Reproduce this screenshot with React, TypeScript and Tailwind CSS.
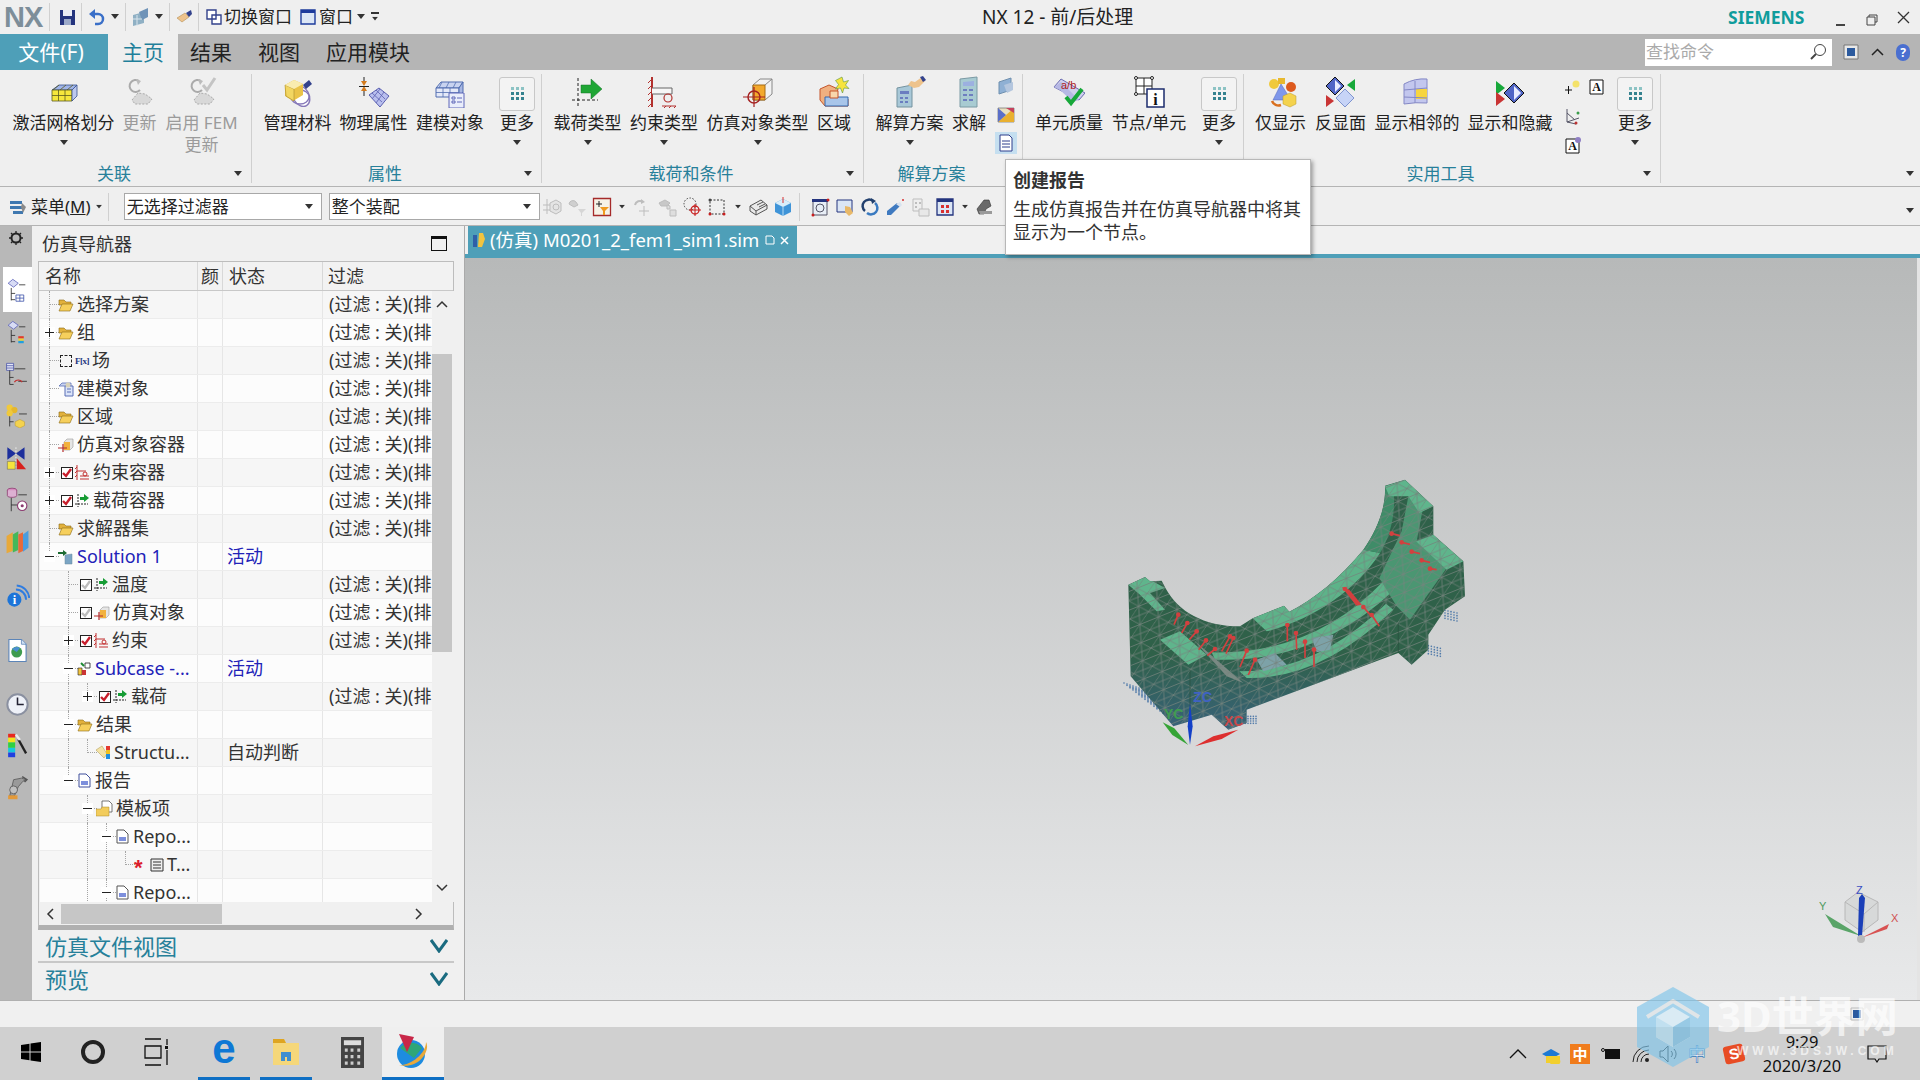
import type { ReactNode } from 'react'

const Ic = ({ s = 32, v = 32, children }: { s?: number; v?: number; children: ReactNode }) => (
  <svg width={s} height={s} viewBox={`0 0 ${v} ${v}`} className="shrink-0">
    {children}
  </svg>
)

const Caret = ({ className = '' }: { className?: string }) => (
  <svg width="10" height="6" viewBox="0 0 10 6" className={`shrink-0 ${className}`}>
    <path d="M1 0h8L5 5z" fill="#333" />
  </svg>
)

// ribbon icons
const IcMesh = () => (
  <Ic>
    <path d="M4 14l7-5h18l-5 5z" fill="#9fb4e8" stroke="#35508f" strokeWidth=".8" />
    <path d="M4 14h20v11H4z" fill="#f5e63c" stroke="#5a5a20" strokeWidth=".8" />
    <path d="M24 14l5-5v11l-5 5z" fill="#bcc8ee" stroke="#35508f" strokeWidth=".8" />
    <path d="M4 19.5h20M10.5 14v11M17 14v11M11 9l-6 5M18 9l-6 5M25 9l-6 5" stroke="#5a5a20" strokeWidth=".8" />
  </Ic>
)
const IcUpdate = ({ check = false }: { check?: boolean }) => (
  <Ic>
    <path d="M15 5a6 6 0 1 0 1 9" fill="none" stroke="#aaa" strokeWidth="2" />
    <path d="M12 3l5 2-3 4z" fill="#bbb" />
    <path d="M8 24l6-7 7 1 7 5-4 5H11z" fill="#d8d8d8" stroke="#aaa" strokeDasharray="2 1.5" />
    {check && <path d="M17 9l4 5 8-12" fill="none" stroke="#c4c4c4" strokeWidth="3" />}
  </Ic>
)
const IcMaterial = () => (
  <Ic>
    <ellipse cx="19" cy="20" rx="8" ry="11" fill="#fff" stroke="#8678b8" strokeWidth="1.4" transform="rotate(-30 19 20)" />
    <ellipse cx="18" cy="21" rx="9" ry="7" fill="none" stroke="#8678b8" strokeWidth="1.4" />
    <path d="M3 9l9-5 9 4v11l-10 6-8-5z" fill="#eac348" />
    <path d="M3 9l9 4v12l-8-5z" fill="#f2d661" stroke="#a8892b" strokeWidth=".6" />
    <path d="M3 9l9-5 9 4-9 5z" fill="#f9ecb0" />
    <path d="M21 9l6-5 3 4-6 5z" fill="#33428c" />
  </Ic>
)
const IcPhysical = () => (
  <Ic>
    <path d="M6 1v7M6 14v6" stroke="#222" />
    <path d="M3 5h6l-3 5zM3 15l3-5 3 5z" fill="#d47b1e" />
    <path d="M1 10.5h10" stroke="#222" />
    <path d="M11 19l10-7 10 8-9 11z" fill="#b9bfee" stroke="#5a5fb0" />
    <path d="M14 17l10 9M18 14l9 9M26 16l-8 11M22 13l-8 10" stroke="#5a5fb0" strokeWidth=".8" />
  </Ic>
)
const IcModel = () => (
  <Ic>
    <path d="M2 12l5-6h22l-4 6z" fill="#c8d3f0" stroke="#506db0" />
    <path d="M2 12h23v9H2z" fill="#e4e9f8" stroke="#506db0" />
    <path d="M8 6L5 12M15 6l-3 6M22 6l-3 6M9 12v9M16 12v9M2 16.5h23" stroke="#506db0" strokeWidth=".8" />
    <path d="M25 12l4-6v10l-4 5z" fill="#a6b6e2" stroke="#506db0" />
    <path d="M15 17h15v15H15z" fill="#e9edfb" stroke="#5e66b8" />
    <path d="M18 21h3v2h-3zM18 25h3v2h-3zM23 22h5M23 26h5" fill="none" stroke="#5e66b8" />
  </Ic>
)
const IcLoad = () => (
  <Ic>
    <path d="M6 2v28M0 24h26" stroke="#222" strokeDasharray="3 2" />
    <path d="M9 9h10V3l11 10-11 10v-6H9z" fill="#1fa635" stroke="#16702a" strokeWidth=".5" />
  </Ic>
)
const IcConstraint = () => (
  <Ic>
    <path d="M4 1v30" stroke="#b3312e" strokeWidth="2" />
    <path d="M0 7l4-4M0 13l4-4M0 19l4-4M0 25l4-4M0 31l4-4" stroke="#b3312e" />
    <path d="M4 12h20v6H4" fill="#f6f6f6" stroke="#666" />
    <circle cx="20" cy="22" r="4" fill="none" stroke="#b3312e" strokeWidth="1.2" />
    <path d="M14 30h14M15 33l3-3M20 33l3-3M25 33l3-3" stroke="#b3312e" />
  </Ic>
)
const IcSimObj = () => (
  <Ic>
    <path d="M11 9l7-6h12v15l-7 6H11z" fill="#f2f2f2" stroke="#888" />
    <path d="M11 9h12v15H11z" fill="#f3a92c" stroke="#a76d14" />
    <path d="M23 9l7-6" stroke="#888" />
    <circle cx="12" cy="21" r="6" fill="none" stroke="#a52222" strokeWidth="1.5" />
    <path d="M1 21h22M12 11v20" stroke="#a52222" strokeWidth="1.2" />
  </Ic>
)
const IcRegion = () => (
  <Ic>
    <path d="M2 13l9-4 9 4-2 9 12 1v7H7L2 24z" fill="#f0b080" stroke="#c4552a" />
    <path d="M7 21h23v9H7z" fill="#a8c5ea" stroke="#3569ad" />
    <path d="M12 15h8v7h-8z" fill="#f8d6ac" stroke="#c4552a" />
    <path d="M24 1l1.5 5 5-1.5-3 4.5 3.500 3.500-5-.5-1.500 5-2-5-5 1 3-4.500-3-4z" fill="#f7e43c" stroke="#5b9640" strokeWidth=".6" />
  </Ic>
)
const IcSolution = () => (
  <Ic>
    <path d="M3 12l15-3v22H3z" fill="#a8c8d8" stroke="#75939f" />
    <path d="M6 15h9v3H6zM6 21h3v2H6zM11 21h3v2h-3zM6 25h3v2H6zM11 25h3v2h-3z" fill="#6a7ec0" />
    <path d="M14 9l3-4 4 1 7-5 3 4-6 6-5 1z" fill="#eec38c" />
    <path d="M26 1l3-1 3 4-3 2z" fill="#33428c" />
  </Ic>
)
const IcSolve = () => (
  <Ic>
    <path d="M7 3l17-2v30H7z" fill="#a8cbd2" stroke="#7b9aa4" />
    <path d="M10 6l11-1v5H10z" fill="#9cb0e0" />
    <path d="M10 13h4v2h-4zM16 13h4v2h-4zM10 18h4v2h-4zM16 18h4v2h-4zM10 23h4v2h-4zM16 23h4v2h-4z" fill="#6e7fc0" />
  </Ic>
)
const IcQuality = () => (
  <Ic>
    <path d="M1 11l7-8 24 14-6 7z" fill="#cfd0ee" stroke="#6a6ab0" />
    <path d="M1 11l6 3 13 12 6-2-18-18z" fill="#b6b8e4" />
    <text x="8" y="13" fontSize="11" fill="#b01b1b" fontFamily="Liberation Sans">a/b</text>
    <path d="M13 21l5 6L29 13" fill="none" stroke="#17a83a" strokeWidth="4" />
  </Ic>
)
const IcNode = () => (
  <Ic>
    <path d="M3 2h16v16H3zM3 10h16M11 2v16" fill="#fff" stroke="#222" />
    <circle cx="3" cy="2" r="1.500" fill="#fff" stroke="#222" />
    <circle cx="19" cy="2" r="1.500" fill="#fff" stroke="#222" />
    <circle cx="3" cy="18" r="1.500" fill="#fff" stroke="#222" />
    <path d="M14 13h17v18H14z" fill="#fff" stroke="#1d2d6e" strokeWidth="1.500" />
    <text x="22.500" y="29" textAnchor="middle" fontSize="16" fontWeight="700" fill="#111" fontFamily="Liberation Serif">i</text>
  </Ic>
)
const IcOnly = () => (
  <Ic>
    <circle cx="9" cy="8" r="5" fill="#f0c93c" />
    <path d="M13 2h7v6h-7z" fill="#e8b92f" />
    <path d="M16 8l10 16H8z" fill="#7f97ea" stroke="#5266b8" strokeWidth=".5" />
    <circle cx="26" cy="11" r="5" fill="#dd5a1e" />
    <path d="M18 20l7-3 6 3v8l-6 3-7-3z" fill="#f4d24d" stroke="#bb9a2a" strokeWidth=".5" />
    <path d="M7 25a7 7 0 0 0 9 4" fill="none" stroke="#d97020" strokeWidth="2.500" />
  </Ic>
)
const IcReverse = () => (
  <Ic>
    <path d="M10 1l9 9-9 9-9-9z" fill="#5065c6" stroke="#111" />
    <path d="M10 4l6 6-6 6z" fill="#e8ecff" />
    <path d="M20 13l9 9-9 9-9-9z" fill="#c7d4f7" stroke="#7f94cf" />
    <path d="M30 3v12l-8-6z" fill="#17a83a" />
    <path d="M1 19l8 6-8 6z" fill="#c93434" />
  </Ic>
)
const IcAdjacent = () => (
  <Ic>
    <path d="M3 8q11-6 23-5v24Q15 26 3 28z" fill="#c3c7ee" stroke="#8488c5" />
    <path d="M15 13h11v10H15z" fill="#f7d53f" />
    <path d="M3 14l23-2M3 21l23 1M14 5v22" stroke="#8488c5" />
  </Ic>
)
const IcShowHide = () => (
  <Ic>
    <path d="M20 7l10 10-10 10-10-10z" fill="#5065c6" stroke="#111" />
    <path d="M20 10l7 7-7 7z" fill="#e8ecff" />
    <path d="M2 5l9 7-9 7z" fill="#17a83a" />
    <path d="M2 16l9 7-9 7z" fill="#c93434" />
  </Ic>
)
const SmallA = ({ withBulb = false }: { withBulb?: boolean }) => (
  <Ic s={18} v={18}>
    <path d="M2 3h13v14H2z" fill="#fff" stroke="#111" />
    <text x="8.500" y="14" textAnchor="middle" fontSize="12" fontWeight="700" fontFamily="Liberation Serif" fill="#111">A</text>
    {withBulb && <circle cx="14" cy="4" r="3" fill="#8f7fc4" />}
  </Ic>
)
const IcDots = () => (
  <svg width="14" height="16" viewBox="0 0 14 16">
    {[0, 5, 10].map((x) =>
      [0, 5, 10].map((y) => <rect key={`${x}-${y}`} x={x + 1} y={y + 1} width="3" height="3" fill={y === 0 ? '#8cc3c4' : '#35828f'} />),
    )}
  </svg>
)

// one ribbon command: icon on top, label under it, optional dropdown caret
const Cmd = ({
  w,
  label,
  second,
  icon,
  muted,
  caret,
}: {
  w: string
  label: string
  second?: string
  icon: ReactNode
  muted?: boolean
  caret?: boolean
}) => (
  <div className={`${w} shrink-0 flex flex-col items-center`}>
    <div className="h-[38px] flex items-center">{icon}</div>
    <div className={`mt-[1px] text-[17px] leading-[22px] whitespace-nowrap ${muted ? 'text-[#9b9b9b]' : 'text-[#222]'}`}>{label}</div>
    {second && <div className="text-[17px] leading-[22px] whitespace-nowrap text-[#9b9b9b]">{second}</div>}
    {caret && <Caret className="mt-[6px]" />}
  </div>
)

const More = () => (
  <Cmd
    w="w-[36px]"
    label="更多"
    caret
    icon={
      <div className="w-[36px] h-[34px] mt-[4px] border border-[#c8c8c8] rounded-[3px] bg-[#f3f3f3] flex items-center justify-center">
        <IcDots />
      </div>
    }
  />
)

const Group = ({
  w,
  pl,
  gap,
  label,
  children,
  noCaret,
}: {
  w: string
  pl: string
  gap: string
  label?: string
  children: ReactNode
  noCaret?: boolean
}) => (
  <div className={`${w} shrink-0 h-full flex flex-col relative`}>
    <div className={`h-[91px] pt-[3px] flex items-start ${pl} ${gap}`}>{children}</div>
    <div className="flex-1 flex items-center pr-[4px] pt-[1px]">
      <div className="flex-1 text-center text-[17px] leading-[22px] text-[#27809a]">{label}</div>
      <Caret className={`mr-[5px] ml-[5px] ${noCaret ? 'invisible' : ''}`} />
    </div>
    <div className="absolute right-0 top-[4px] bottom-[3px] w-px bg-[#cfcfcf]" />
  </div>
)

const Ribbon = () => (
  <div className="h-[117px] shrink-0 bg-[#efefef] border-b border-[#b4b4b4] flex">
    <Group w="w-[252px]" pl="pl-[12px]" gap="gap-[6px]" label="关联">
      <Cmd w="w-[103px]" label="激活网格划分" icon={<IcMesh />} caret />
      <Cmd w="w-[37px]" label="更新" muted icon={<IcUpdate />} />
      <Cmd w="w-[75px]" label="启用 FEM" second="更新" muted icon={<IcUpdate check />} />
    </Group>
    <Group w="w-[290px]" pl="pl-[11px]" gap="gap-[7px]" label="属性">
      <Cmd w="w-[69px]" label="管理材料" icon={<IcMaterial />} />
      <Cmd w="w-[69px]" label="物理属性" icon={<IcPhysical />} />
      <Cmd w="w-[70px]" label="建模对象" icon={<IcModel />} />
      <div className="ml-[7px]">
        <More />
      </div>
    </Group>
    <Group w="w-[322px]" pl="pl-[11px]" gap="gap-[8px]" label="载荷和条件">
      <Cmd w="w-[69px]" label="载荷类型" icon={<IcLoad />} caret />
      <Cmd w="w-[68px]" label="约束类型" icon={<IcConstraint />} caret />
      <Cmd w="w-[103px]" label="仿真对象类型" icon={<IcSimObj />} caret />
      <Cmd w="w-[34px]" label="区域" icon={<IcRegion />} />
    </Group>
    <Group w="w-[159px]" pl="pl-[11px]" gap="gap-[8px]" label="解算方案" noCaret>
      <Cmd w="w-[69px]" label="解算方案" icon={<IcSolution />} caret />
      <Cmd w="w-[34px]" label="求解" icon={<IcSolve />} />
      <div className="w-[24px] flex flex-col items-center gap-[8px] pt-[3px]">
        <Ic s={20} v={20}>
          <path d="M3 6l12-4v12l-12 4z" fill="#8fb0d4" stroke="#6f8fae" />
          <path d="M8 9l9-3v8l-6 3z" fill="#b4c6de" />
        </Ic>
        <Ic s={20} v={20}>
          <path d="M2 4h16v14H2z" fill="#e8e0c0" stroke="#555" strokeWidth=".6" />
          <path d="M2 18L18 4v14z" fill="#e9b030" />
          <path d="M2 4l8 7-8 7z" fill="#5a6fc8" />
          <path d="M10 4h8v5z" fill="#c5415c" />
        </Ic>
        <div className="w-[22px] h-[22px] bg-[#c5dff0] flex items-center justify-center">
          <Ic s={18} v={18}>
            <path d="M3 1h9l3 3v13H3z" fill="#fff" stroke="#2f3f8c" />
            <path d="M5 7h8M5 10h8M5 13h8" stroke="#2f3f8c" />
          </Ic>
        </div>
      </div>
    </Group>
    <Group w="w-[221px]" pl="pl-[12px]" gap="gap-[8px]" noCaret>
      <Cmd w="w-[68px]" label="单元质量" icon={<IcQuality />} />
      <Cmd w="w-[76px]" label="节点/单元" icon={<IcNode />} />
      <div className="ml-[6px]">
        <More />
      </div>
    </Group>
    <Group w="w-[417px]" pl="pl-[10px]" gap="gap-[7px]" label="实用工具">
      <Cmd w="w-[53px]" label="仅显示" icon={<IcOnly />} />
      <Cmd w="w-[53px]" label="反显面" icon={<IcReverse />} />
      <Cmd w="w-[86px]" label="显示相邻的" icon={<IcAdjacent />} />
      <Cmd w="w-[86px]" label="显示和隐藏" icon={<IcShowHide />} />
      <div className="w-[48px] flex gap-0">
        <div className="w-[25px] flex flex-col items-center gap-[11px] pt-[5px]">
          <Ic s={18} v={18}>
            <path d="M1 12h7M4.500 8v8" stroke="#111" />
            <circle cx="12" cy="6" r="3.500" fill="#f4e26a" />
          </Ic>
          <Ic s={18} v={18}>
            <path d="M3 2v13l12-4M3 15l9 2M3 6l8 7" fill="none" stroke="#556" />
            <circle cx="14" cy="6" r="1.500" fill="#3a9c4a" />
            <circle cx="12" cy="16" r="1.500" fill="#b33" />
          </Ic>
          <SmallA withBulb />
        </div>
        <div className="w-[23px] flex justify-center pt-[4px]">
          <SmallA />
        </div>
      </div>
      <div className="ml-[2px]">
        <More />
      </div>
    </Group>
    <div className="flex-1 flex flex-col justify-end items-end pr-[5px] pb-[9px]">
      <Caret />
    </div>
  </div>
)

const TitleBar = () => (
  <div className="h-[34px] shrink-0 bg-[#efefef] flex items-center relative">
    <span className="ml-[4px] w-[40px] text-[29px] leading-[34px] font-bold text-[#7d8e9a] font-['Liberation_Sans',sans-serif] tracking-[-1px]">NX</span>
    <div className="w-px h-[28px] bg-[#d0d0d0] ml-[5px]" />
    <div className="ml-[9px]">
      <Ic s={17} v={17}>
        <path d="M1 1h15v15H1z" fill="#24347e" />
        <path d="M4 1h9v6H4z" fill="#e9ecf5" />
        <path d="M5 10h7v6H5z" fill="#9ba9c9" />
      </Ic>
    </div>
    <div className="w-px h-[28px] bg-[#d0d0d0] ml-[5px]" />
    <div className="ml-[6px]">
      <Ic s={17} v={17}>
        <path d="M4 5h6a5 5 0 0 1 0 10H7" fill="none" stroke="#3a6fc8" strokeWidth="2.500" />
        <path d="M7 0v10L1 5z" fill="#3a6fc8" />
      </Ic>
    </div>
    <Caret className="ml-[5px]" />
    <div className="w-px h-[28px] bg-[#d0d0d0] ml-[5px]" />
    <div className="ml-[5px]">
      <Ic s={20} v={20}>
        <path d="M2 8l11-3v11l-11 3z" fill="#8fb0c4" />
        <path d="M8 5l9-4v9l-6 3z" fill="#6f93b8" />
        <path d="M2 12h9M6 8v11" stroke="#d8e4ec" />
      </Ic>
    </div>
    <Caret className="ml-[3px]" />
    <div className="w-px h-[28px] bg-[#d0d0d0] ml-[5px]" />
    <div className="ml-[5px]">
      <Ic s={18} v={18}>
        <path d="M2 10l8-5 4 4-7 5z" fill="#eec38c" stroke="#a98344" strokeWidth=".5" />
        <path d="M11 5l5-3 1 4-3 3z" fill="#33428c" />
      </Ic>
    </div>
    <div className="w-px h-[28px] bg-[#d0d0d0] ml-[5px]" />
    <div className="ml-[7px]">
      <Ic s={16} v={16}>
        <path d="M1 1h9v9H1zM6 6h9v9H6z" fill="#fff" stroke="#33428c" strokeWidth="1.400" />
      </Ic>
    </div>
    <span className="ml-[2px] text-[17px] leading-[34px] text-[#222]">切换窗口</span>
    <div className="ml-[8px]">
      <Ic s={16} v={16}>
        <path d="M1 1h14v14H1z" fill="#dce6f5" stroke="#1d3b9c" strokeWidth="1.400" />
        <path d="M1 1h14v3H1z" fill="#1d3b9c" />
      </Ic>
    </div>
    <span className="ml-[3px] text-[17px] leading-[34px] text-[#222]">窗口</span>
    <Caret className="ml-[3px]" />
    <div className="ml-[4px] flex flex-col items-center gap-[2px]">
      <div className="w-[8px] h-[1.500px] bg-[#333]" />
      <Caret className="scale-75" />
    </div>
    <span className="absolute left-[982px] text-[19px] leading-[34px] text-[#222] whitespace-nowrap">NX 12 - 前/后处理</span>
    <span className="absolute left-[1728px] text-[17.500px] leading-[34px] font-bold text-[#0f9c9c] font-['Noto_Sans',sans-serif]">SIEMENS</span>
    <div className="absolute left-[1836px] top-[24px] w-[9px] h-[2px] bg-[#444]" />
    <svg className="absolute left-[1866px] top-[14px]" width="12" height="12" viewBox="0 0 12 12">
      <path d="M3 3V1h8v7H9M1 3h8v8H1z" fill="none" stroke="#444" />
    </svg>
    <svg className="absolute left-[1897px] top-[11px]" width="13" height="13" viewBox="0 0 13 13">
      <path d="M1 1l11 11M12 1L1 12" stroke="#333" strokeWidth="1.300" />
    </svg>
  </div>
)

const TabBar = () => (
  <div className="h-[36px] shrink-0 bg-[#b5b5b5] flex items-stretch">
    <div className="w-[108px] bg-[#4e9fb8] text-white text-[21px] leading-[36px] text-center pr-[6px]">文件(F)</div>
    <div className="w-[70px] bg-[#efefef] text-[#1f7f9a] text-[21px] leading-[36px] text-center">主页</div>
    <div className="ml-[12px] flex gap-[26px] text-[21px] leading-[36px] text-[#222]">
      <span>结果</span>
      <span>视图</span>
      <span>应用模块</span>
    </div>
    <div className="ml-auto mr-[10px] flex items-center gap-[11px]">
      <div className="w-[187px] h-[27px] bg-white flex items-center justify-between pl-[1px] pr-[5px]">
        <span className="text-[17px] leading-[24px] text-[#aaa]">查找命令</span>
        <svg width="18" height="18" viewBox="0 0 18 18">
          <circle cx="11" cy="7" r="5.500" fill="#fff" stroke="#444" />
          <path d="M7 11l-5 5" stroke="#444" strokeWidth="2" />
        </svg>
      </div>
      <Ic s={16} v={16}>
        <path d="M1 1h14v14H1z" fill="#e8e8e8" stroke="#777" />
        <path d="M4 4h8v8H4z" fill="#2b5a9e" />
      </Ic>
      <svg width="13" height="9" viewBox="0 0 13 9" className="mx-[1px]">
        <path d="M1 7l5.500-5.500L12 7" fill="none" stroke="#222" strokeWidth="1.500" />
      </svg>
      <div className="w-[14px] h-[17px] rounded-full bg-[#4a6fd0] text-white text-[12px] leading-[17px] text-center font-bold">?</div>
    </div>
  </div>
)

const G = '#bdbdbd'
const toolbarIcons: ReactNode[] = [
  <>
    <path d="M5 2v15M1 8h9M1 13h9" stroke={G} />
    <path d="M8 6l6-3 5 3v8l-5 3-6-3z" fill="#e4e4e4" stroke={G} />
    <circle cx="14" cy="10" r="3" fill="none" stroke={G} />
  </>,
  <>
    <path d="M2 7a4 4 0 0 1 7-2l2 3-4 2z" fill="#cfcfcf" stroke={G} />
    <path d="M11 12h8l-4 4v3h-1v-3z" fill="#d6d6d6" />
  </>,
  <>
    <path d="M1.500 1.500h17v17h-17z" fill="#f6f2e6" stroke="#a52a2a" strokeWidth="1.300" />
    <path d="M4 7h6M7 4v6" stroke="#222" />
    <path d="M8 10h9l-4 4v4h-2v-4z" fill="#f09a1e" />
  </>,
  <>
    <path d="M3 8a5 5 0 0 1 8-3" fill="none" stroke={G} strokeWidth="2" />
    <path d="M9 2l4 3-4 2z" fill={G} />
    <path d="M12 9v10M7 14h10" stroke={G} />
  </>,
  <>
    <path d="M2 6l6-3 5 3-3 3-6 0z" fill="#c8c8c8" stroke={G} />
    <path d="M10 8l3 1v3h-3zM13 13h6v6h-6z" fill="#dedede" stroke={G} />
  </>,
  <>
    <circle cx="8" cy="7" r="6" fill="none" stroke="#444" strokeDasharray="1.500 1.500" />
    <circle cx="13" cy="13" r="4" fill="none" stroke="#c81e1e" strokeWidth="1.300" />
    <path d="M13 7v12M7 13h12" stroke="#c81e1e" />
  </>,
  <>
    <path d="M3 3h14v14H3z" fill="none" stroke="#333" strokeDasharray="2 1.500" />
    <circle cx="3" cy="17" r="1.500" fill="#c81e1e" />
    <circle cx="17" cy="17" r="1.500" fill="#c81e1e" />
    <circle cx="3" cy="3" r="1.500" fill="#444" />
  </>,
  <>
    <path d="M2 9l11-6 6 5v4L8 18l-6-4z" fill="#eaeaea" stroke="#555" />
    <path d="M2 9l6 5 11-6M8 14v4M9 8l6-3M11 10l6-3" fill="none" stroke="#555" />
  </>,
  <>
    <path d="M2 6l8-4 8 4v9l-8 4-8-4z" fill="#3f94d8" />
    <path d="M2 6l8-4 8 4-8 4z" fill="#d8edfa" />
    <path d="M10 10v9" stroke="#b8dcf4" />
    <path d="M10 0v6" stroke="#d83030" />
  </>,
  <>
    <path d="M2 2h16v3H2z" fill="#24347e" />
    <path d="M3 5v13h14V5" fill="#e8eef6" stroke="#556" />
    <circle cx="10" cy="11" r="4" fill="none" stroke="#556" />
    <circle cx="3" cy="18" r="1.500" fill="#c81e1e" />
    <circle cx="18" cy="3" r="1.500" fill="#c81e1e" />
  </>,
  <>
    <path d="M2 3h15v12H2z" fill="#dbe6f5" stroke="#24347e" />
    <path d="M10 9l5 1 3 6-4 3-4-4z" fill="#e8b868" />
  </>,
  <>
    <path d="M5 14A6 6 0 0 1 13 4" fill="none" stroke="#22406e" strokeWidth="2.500" />
    <path d="M15 6a6 6 0 0 1-8 10" fill="none" stroke="#3a7ac0" strokeWidth="2.500" />
    <path d="M11 1l5 3-4 3z" fill="#22406e" />
  </>,
  <>
    <path d="M2 14l10-8 3 3-9 9H2z" fill="#3f7ac0" />
    <path d="M11 7l4-2 2 3-2 2z" fill="#d8e2ef" />
    <circle cx="18" cy="3" r="1" fill="#d83030" />
  </>,
  <>
    <path d="M3 2h9v12H3z" fill="#eee" stroke={G} />
    <path d="M5 5h2v2H5zM9 5h2v2H9zM5 9h2v2H5z" fill={G} />
    <path d="M9 12h10v7H9z" fill="#e8e8e8" stroke={G} />
  </>,
  <>
    <path d="M2 2h16v16H2z" fill="#dbe6f5" stroke="#24347e" strokeWidth="1.300" />
    <path d="M2 2h16v3H2z" fill="#24347e" />
    <path d="M6 8h3v3H6zM11 8h3v3h-3zM6 13h3v3H6zM11 13h3v3h-3z" fill="#d83030" />
  </>,
  <>
    <path d="M3 12L10 3h5l2 6-5 3-2 5H5z" fill="#6a6a6a" stroke="#333" strokeWidth=".6" />
    <path d="M5 14h13v3H6z" fill="#9a9a9a" />
  </>,
]

const Tb = ({ i }: { i: number }) => (
  <div className="w-[25px] flex justify-center shrink-0">
    <Ic s={20} v={20}>{toolbarIcons[i]}</Ic>
  </div>
)

const SelectBox = ({ w, text }: { w: string; text: string }) => (
  <div className={`${w} h-[27px] bg-white border border-[#a8a8a8] flex items-center justify-between pl-[2px] pr-[7px]`}>
    <span className="text-[17px] leading-[24px] text-[#222]">{text}</span>
    <Caret />
  </div>
)

const Toolbar = () => (
  <div className="h-[39px] shrink-0 bg-[#efefef] border-b border-[#b4b4b4] flex items-center pt-[1px]">
    <div className="ml-[9px]">
      <Ic s={18} v={18}>
        <path d="M1 3h12v3H1zM1 8h12v3H1zM4 13h10v3H4z" fill="#3f78b0" />
        <path d="M13 5l4 4-3 6-2-6z" fill="#8a8a8a" />
      </Ic>
    </div>
    <span className="ml-[4px] text-[17px] text-[#222] leading-[24px]">
      菜单(<span className="underline">M</span>)
    </span>
    <Caret className="ml-[3px] scale-75" />
    <div className="w-px h-[28px] bg-[#d0d0d0] ml-[4px]" />
    <div className="ml-[15px] flex gap-[7px]">
      <SelectBox w="w-[198px]" text="无选择过滤器" />
      <SelectBox w="w-[211px]" text="整个装配" />
    </div>
    <div className="flex items-center">
      <Tb i={0} />
      <Tb i={1} />
      <Tb i={2} />
      <div className="w-[15px] flex justify-center">
        <Caret className="scale-75" />
      </div>
      <Tb i={3} />
      <Tb i={4} />
      <Tb i={5} />
      <Tb i={6} />
      <div className="w-[16px] flex justify-center">
        <Caret className="scale-75" />
      </div>
      <Tb i={7} />
      <Tb i={8} />
      <div className="w-px h-[28px] bg-[#d0d0d0] ml-[3px] mr-[8px]" />
      <Tb i={9} />
      <Tb i={10} />
      <Tb i={11} />
      <Tb i={12} />
      <Tb i={13} />
      <Tb i={14} />
      <div className="w-[14px] flex justify-center">
        <Caret className="scale-75" />
      </div>
      <Tb i={15} />
    </div>
    <Caret className="ml-auto mr-[5px] mt-[8px]" />
  </div>
)

// tree row icons
const Folder = () => (
  <Ic s={16} v={16}>
    <path d="M1 3h5l2 2h5v3H1z" fill="#e2b13c" stroke="#8c6a15" strokeWidth=".6" />
    <path d="M1 14l3-7h11l-3 7z" fill="#f6cf5c" stroke="#8c6a15" strokeWidth=".6" />
  </Ic>
)
const Check = ({ on = true }: { on?: boolean }) => (
  <svg width="12" height="12" viewBox="0 0 12 12" className="shrink-0 ml-[3px]">
    <rect x=".5" y=".5" width="11" height="11" fill="#fff" stroke="#222" />
    <path d="M2 6l3 3 5-7" fill="none" stroke={on ? '#c81e2c' : '#bdbdbd'} strokeWidth="2.400" />
  </svg>
)
const ConstraintTiny = () => (
  <Ic s={15} v={15}>
    <path d="M2 0v15M0 4l2-2M0 8l2-2M0 12l2-2M2 6h9M5 11h9M5 14h9" stroke="#c23030" strokeWidth="1" />
    <circle cx="10" cy="9" r="2" fill="none" stroke="#c23030" />
  </Ic>
)
const LoadTiny = () => (
  <Ic s={15} v={15}>
    <path d="M3 1v13M0 11h13" stroke="#222" strokeDasharray="2 1" />
    <path d="M5 4h4V1l5 4-5 4V7H5z" fill="#169c34" />
  </Ic>
)
const SimTiny = () => (
  <Ic s={16} v={16}>
    <path d="M6 5l3-3h6v8l-3 3H6z" fill="#e5e5e5" stroke="#999" strokeWidth=".6" />
    <path d="M6 5h6v8H6z" fill="#f2b23f" />
    <path d="M0 11h9M5 7v8" stroke="#b42a2a" strokeWidth="1.200" />
  </Ic>
)
const Doc = ({ c = '#3f4f9c' }: { c?: string }) => (
  <Ic s={15} v={15}>
    <path d="M2 1h7l4 4v9H2z" fill="#fff" stroke={c} />
    <path d="M4 8h7v4H4z" fill="#7d8fdc" />
  </Ic>
)

type Row = {
  lv: number
  exp?: '+' | '-'
  icon?: ReactNode
  text: string
  blue?: boolean
  state?: string
  filter?: boolean
  guides: number[]
  half?: number[]
}

const rows: Row[] = [
  { lv: 0, icon: <Folder />, text: '选择方案', filter: true, guides: [0] },
  { lv: 0, exp: '+', icon: <Folder />, text: '组', filter: true, guides: [0] },
  {
    lv: 0,
    icon: (
      <>
        <div className="w-[12px] h-[12px] ml-[2px] border border-dashed border-[#222] shrink-0" />
        <span className="ml-[1px] text-[9px] font-bold leading-[12px] tracking-[-0.5px] text-[#24347e] font-['Liberation_Serif',serif]">F[x]</span>
      </>
    ),
    text: '场',
    filter: true,
    guides: [0],
  },
  {
    lv: 0,
    icon: (
      <Ic s={16} v={16}>
        <path d="M1 5l3-3h9v3z" fill="#c8d3f0" stroke="#5a6fb5" strokeWidth=".8" />
        <path d="M7 5h8v10H7z" fill="#dbe4f8" stroke="#5a6fb5" />
        <path d="M9 8h4M9 11h4" stroke="#5a6fb5" />
        <circle cx="10" cy="4" r="2.500" fill="#d8d2b8" />
      </Ic>
    ),
    text: '建模对象',
    filter: true,
    guides: [0],
  },
  { lv: 0, icon: <Folder />, text: '区域', filter: true, guides: [0] },
  { lv: 0, icon: <SimTiny />, text: '仿真对象容器', filter: true, guides: [0] },
  {
    lv: 0,
    exp: '+',
    icon: (
      <>
        <Check />
        <ConstraintTiny />
      </>
    ),
    text: '约束容器',
    filter: true,
    guides: [0],
  },
  {
    lv: 0,
    exp: '+',
    icon: (
      <>
        <Check />
        <LoadTiny />
      </>
    ),
    text: '载荷容器',
    filter: true,
    guides: [0],
  },
  { lv: 0, icon: <Folder />, text: '求解器集', filter: true, guides: [0] },
  {
    lv: 0,
    exp: '-',
    icon: (
      <Ic s={16} v={16}>
        <path d="M0 3h5V1l4 3-4 3V5H0z" fill="#1c6b32" />
        <path d="M7 6l7-1v10H7z" fill="#7ba5c4" stroke="#6a8a9c" strokeWidth=".5" />
      </Ic>
    ),
    text: 'Solution 1',
    blue: true,
    state: '活动',
    guides: [],
    half: [0],
  },
  {
    lv: 1,
    icon: (
      <>
        <Check on={false} />
        <LoadTiny />
      </>
    ),
    text: '温度',
    filter: true,
    guides: [1],
  },
  {
    lv: 1,
    icon: (
      <>
        <Check on={false} />
        <SimTiny />
      </>
    ),
    text: '仿真对象',
    filter: true,
    guides: [1],
  },
  {
    lv: 1,
    exp: '+',
    icon: (
      <>
        <Check />
        <ConstraintTiny />
      </>
    ),
    text: '约束',
    filter: true,
    guides: [1],
  },
  {
    lv: 1,
    exp: '-',
    icon: (
      <Ic s={15} v={15}>
        <path d="M1 7h4v7H1z" fill="#f2c43f" stroke="#222" strokeWidth=".6" />
        <path d="M8 2h5v5H8z" fill="#fff" stroke="#222" strokeWidth=".8" />
        <path d="M5 9h4v5H5z" fill="#c93434" />
        <path d="M4 2l3 3" stroke="#1c8a32" strokeWidth="2" />
      </Ic>
    ),
    text: 'Subcase -...',
    blue: true,
    state: '活动',
    guides: [1],
  },
  {
    lv: 2,
    exp: '+',
    icon: (
      <>
        <Check />
        <LoadTiny />
      </>
    ),
    text: '载荷',
    filter: true,
    guides: [1],
    half: [2],
  },
  { lv: 1, exp: '-', icon: <Folder />, text: '结果', guides: [1] },
  {
    lv: 2,
    icon: (
      <Ic s={15} v={15}>
        <path d="M0 5l6-4 5 8-3 4z" fill="#f3e3a8" stroke="#bba55a" strokeWidth=".6" />
        <path d="M10 1h4v4h-4z" fill="#e43a2e" />
        <path d="M10 5h4v4h-4z" fill="#f2c21e" />
        <path d="M10 9h4v5h-4z" fill="#1f8fe0" />
      </Ic>
    ),
    text: 'Structu...',
    state: '自动判断',
    guides: [1],
    half: [2],
  },
  { lv: 1, exp: '-', icon: <Doc />, text: '报告', guides: [], half: [1] },
  {
    lv: 2,
    exp: '-',
    icon: (
      <Ic s={17} v={17}>
        <path d="M6 1h7l3 3v8H6z" fill="#fff" stroke="#555" strokeWidth=".8" />
        <path d="M0 9h5l1-2h7v9H0z" fill="#f2cc5c" stroke="#a98a2a" strokeWidth=".5" />
      </Ic>
    ),
    text: '模板项',
    guides: [2],
  },
  { lv: 3, exp: '-', icon: <Doc c="#555" />, text: 'Repo...', guides: [2, 3] },
  {
    lv: 4,
    icon: (
      <>
        <span className="w-[12px] text-[22px] leading-[20px] font-bold text-[#dc1c2c] font-['Liberation_Sans',sans-serif] mt-[6px] shrink-0">*</span>
        <div className="ml-[2px]">
          <Ic s={14} v={14}>
            <path d="M1 1h12v12H1z" fill="#eee" stroke="#333" />
            <path d="M3 4h8M3 7h8M3 10h8" stroke="#333" />
          </Ic>
        </div>
      </>
    ),
    text: 'T...',
    guides: [2, 3],
    half: [4],
  },
  { lv: 3, exp: '-', icon: <Doc c="#555" />, text: 'Repo...', guides: [2, 3] },
]

const TreeRow = ({ r, i }: { r: Row; i: number }) => (
  <div className={`h-[28px] flex relative border-b border-[#ececec] text-[18px] leading-[27px] ${i % 2 ? 'bg-[#fcfcfc]' : 'bg-[#f6f6f6]'}`}>
    {r.guides.map((g) => (
      <span key={g} className="absolute top-0 bottom-[-1px] border-l border-dotted border-[#a5a5a5]" style={{ left: 9 + g * 19 }} />
    ))}
    {(r.half ?? []).map((g) => (
      <span key={g} className="absolute top-0 h-[14px] border-l border-dotted border-[#a5a5a5]" style={{ left: 9 + g * 19 }} />
    ))}
    <span className="absolute top-[13px] w-[10px] border-t border-dotted border-[#a5a5a5]" style={{ left: 9 + r.lv * 19 }} />
    <div className="w-[158px] shrink-0 flex items-center overflow-hidden border-r border-[#e6e6e6] relative" style={{ paddingLeft: 18 + r.lv * 19 }}>
      {r.exp && (
        <div className="absolute w-[11px] h-[11px] top-[8px] bg-white flex items-center justify-center" style={{ left: 4 + r.lv * 19 }}>
          <span className="absolute w-[9px] h-px bg-[#222]" />
          {r.exp === '+' && <span className="absolute h-[9px] w-px bg-[#222]" />}
        </div>
      )}
      <div className="flex items-center shrink-0 gap-[2px] mr-[3px]">{r.icon}</div>
      <span className={`whitespace-nowrap ${r.blue ? 'text-[#2222b8]' : 'text-[#333]'}`}>{r.text}</span>
    </div>
    <div className="w-[25px] shrink-0 border-r border-[#e6e6e6]" />
    <div className={`w-[100px] shrink-0 border-r border-[#e6e6e6] pl-[4px] ${r.blue ? 'text-[#2222b8]' : 'text-[#333]'}`}>{r.state}</div>
    <div className="flex-1 pl-[6px] overflow-hidden whitespace-nowrap text-[#333]">{r.filter ? '(过滤 : 关)(排除)' : ''}</div>
  </div>
)

const Navigator = () => (
  <div className="w-[433px] shrink-0 bg-[#f0f0f0] border-r border-[#aaa] flex flex-col">
    <div className="h-[35px] shrink-0 flex items-center justify-between pl-[10px] pr-[17px]">
      <span className="text-[18px] leading-[30px] text-[#333]">仿真导航器</span>
      <div className="w-[16px] h-[15px] border border-[#111] border-t-[3px]" />
    </div>
    <div className="ml-[6px] mr-[10px] h-[669px] shrink-0 border border-[#bdbdbd] border-b-[5px] border-b-[#b0b0b0] bg-[#f0f0f0] flex flex-col">
      <div className="h-[29px] shrink-0 bg-[#f2f2f2] border-b border-[#c8c8c8] flex text-[18px] leading-[28px] text-[#333]">
        <div className="w-[159px] pl-[6px] border-r border-[#d8d8d8]">名称</div>
        <div className="w-[25px] border-r border-[#d8d8d8] text-center overflow-hidden">颜</div>
        <div className="w-[100px] pl-[6px] border-r border-[#d8d8d8]">状态</div>
        <div className="pl-[5px]">过滤</div>
      </div>
      <div className="flex-1 min-h-0 flex">
        <div className="w-[393px] shrink-0 h-[611px] overflow-hidden pl-[1px]">
          {rows.map((r, i) => (
            <TreeRow key={i} r={r} i={i} />
          ))}
        </div>
        <div className="w-[22px] h-[611px] shrink-0 bg-[#f0f0f0] flex flex-col items-center pr-[2px]">
          <svg width="12" height="8" viewBox="0 0 12 8" className="mt-[9px]">
            <path d="M1 7l5-5 5 5" fill="none" stroke="#333" strokeWidth="1.500" />
          </svg>
          <div className="w-[20px] h-[298px] mt-[46px] bg-[#c6c6c6]" />
          <svg width="12" height="8" viewBox="0 0 12 8" className="mt-auto mb-[10px]">
            <path d="M1 1l5 5 5-5" fill="none" stroke="#333" strokeWidth="1.500" />
          </svg>
        </div>
      </div>
      <div className="h-[22px] shrink-0 flex items-center pl-[7px] bg-[#f0f0f0]">
        <svg width="8" height="12" viewBox="0 0 8 12">
          <path d="M7 1L2 6l5 5" fill="none" stroke="#333" strokeWidth="1.500" />
        </svg>
        <div className="w-[161px] h-[20px] ml-[7px] bg-[#c6c6c6]" />
        <svg width="8" height="12" viewBox="0 0 8 12" className="ml-[193px]">
          <path d="M1 1l5 5-5 5" fill="none" stroke="#333" strokeWidth="1.500" />
        </svg>
      </div>
    </div>
    <div className="ml-[6px] mr-[10px] h-[33px] shrink-0 border-b-[2px] border-[#c8c8c8] flex items-center justify-between pl-[7px] pr-[6px]">
      <span className="text-[22px] leading-[30px] text-[#27809a]">仿真文件视图</span>
      <svg width="18" height="14" viewBox="0 0 18 14">
        <path d="M1 1l8 11 8-11" fill="none" stroke="#1a6b80" strokeWidth="3" />
      </svg>
    </div>
    <div className="ml-[6px] mr-[10px] h-[31px] shrink-0 flex items-center justify-between pl-[7px] pr-[6px]">
      <span className="text-[22px] leading-[30px] text-[#27809a]">预览</span>
      <svg width="18" height="14" viewBox="0 0 18 14">
        <path d="M1 1l8 11 8-11" fill="none" stroke="#1a6b80" strokeWidth="3" />
      </svg>
    </div>
  </div>
)

const railIcons: ReactNode[] = [
  <>
    <path d="M4 8l6-5 7 5-6 5z" fill="#d8dcf5" stroke="#5b62b8" />
    <path d="M8 14v16M8 21h5M8 29h5M18 10h8" stroke="#222" />
    <path d="M14 23h10v8H14zM19 23v8M14 27h10" fill="none" stroke="#3a4fa8" />
  </>,
  <>
    <path d="M4 8l6-5 7 5-6 5z" fill="#d8dcf5" stroke="#5b62b8" />
    <path d="M8 14v16M8 21h5M8 29h5M18 10h8" stroke="#222" />
    <path d="M17 22h7v3h-7z" fill="#e23a2a" />
    <path d="M17 25h7v3h-7z" fill="#e8d23a" />
    <path d="M17 28h7v3h-7z" fill="#1f9fe0" />
  </>,
  <>
    <path d="M2 3h9v9H2z" fill="#e3e6f5" stroke="#4a55a8" />
    <path d="M2 6h9M2 9h9" stroke="#4a55a8" />
    <path d="M6 12v18M6 21h5M6 30h5M12 10h14M17 26h11" stroke="#222" />
    <path d="M12 27a6 6 0 0 1 10 0" fill="none" stroke="#c23030" strokeWidth="1.500" />
  </>,
  <>
    <circle cx="6" cy="6" r="4" fill="#f0c93c" />
    <circle cx="12" cy="9" r="4" fill="#e6b72c" />
    <circle cx="6" cy="13" r="4" fill="#f0c93c" />
    <path d="M6 17v13M6 24h5M18 14h10" stroke="#222" />
    <path d="M13 24l6-3 6 3v5l-6 3-6-3z" fill="#f4d24d" stroke="#b8952a" strokeWidth=".6" />
  </>,
  <>
    <path d="M3 3l11 8L25 3v16l-11-8-11 8z" fill="#1d2f9c" />
    <path d="M14 3v28" stroke="#fff" strokeDasharray="2 2" />
    <path d="M3 21h10v10H3z" fill="#f6e43c" stroke="#555" strokeWidth=".6" />
    <path d="M15 31V17l12 14z" fill="#d8201c" />
  </>,
  <>
    <ellipse cx="9" cy="4" rx="6" ry="2.500" fill="#d88cc0" stroke="#8c3a70" />
    <path d="M3 4v7c0 3 12 3 12 0V4" fill="#ddb0d2" stroke="#8c3a70" />
    <path d="M8 14v17M8 23h9M17 10h11" stroke="#222" />
    <circle cx="22" cy="24" r="6" fill="#fff" stroke="#8c3a70" strokeWidth="1.400" />
    <circle cx="22" cy="24" r="2" fill="#8c3a70" />
  </>,
  <>
    <path d="M2 9l8-5v24l-8 3z" fill="#e8a93a" />
    <path d="M10 7l7-4v24l-7 3z" fill="#45b85a" />
    <path d="M17 7l6-3v24l-6 3z" fill="#e86a3a" />
    <path d="M23 7l7-5v22l-7 5z" fill="#4a9de0" />
  </>,
  <>
    <circle cx="12" cy="20" r="9" fill="#1c74d8" />
    <text x="12" y="26" fontSize="16" fontWeight="700" textAnchor="middle" fill="#fff" fontFamily="Liberation Serif">i</text>
    <path d="M14 7a13 13 0 0 1 13 13M15 2a17 17 0 0 1 16 16" fill="none" stroke="#2f7ce0" strokeWidth="2.500" />
  </>,
  <>
    <path d="M5 2h16l6 6v22H5z" fill="#fff" stroke="#5c85b8" strokeWidth="1.400" />
    <path d="M21 2v6h6" fill="#cfe0f2" stroke="#5c85b8" />
    <circle cx="15" cy="18" r="7" fill="#3f9c4f" />
    <path d="M9 14a7 7 0 0 1 10-1l-4 5z" fill="#4a8fd0" />
  </>,
  <>
    <circle cx="16" cy="16" r="13" fill="#eef1f8" stroke="#8a90a0" strokeWidth="2.500" />
    <path d="M16 7v9h8" fill="none" stroke="#223" strokeWidth="2" />
  </>,
  <>
    <path d="M4 1h9v5H4z" fill="#e8281e" />
    <path d="M4 6h9v6H4z" fill="#f2e41e" />
    <path d="M4 12h9v7H4z" fill="#30d040" />
    <path d="M4 19h9v6H4z" fill="#16c8e0" />
    <path d="M4 25h9v6H4z" fill="#2040e0" />
    <path d="M17 8l10 18" stroke="#222" strokeWidth="3" />
    <path d="M14 2l5 7" stroke="#eee" strokeWidth="3" />
  </>,
  <>
    <path d="M11 6l10-2 6 2-4 2-6 7-5 12H6z" fill="#9a9a9a" stroke="#555" />
    <circle cx="11" cy="19" r="5" fill="#c0c0c0" stroke="#555" />
    <path d="M4 26h12v5H4z" fill="#e39a3a" />
    <path d="M22 2l6 4-3 3" fill="none" stroke="#555" strokeWidth="2" />
  </>,
]

const RailSlot = ({ h, ic }: { h: string; ic: ReactNode }) => (
  <div className={`${h} flex items-center justify-center shrink-0 pl-[3px]`}>
    <Ic s={25} v={32}>{ic}</Ic>
  </div>
)

const LeftRail = () => (
  <div className="w-[32px] shrink-0 bg-[#b8b8b8] flex flex-col">
    <div className="h-[41px] shrink-0 flex items-center justify-center pb-[18px] pr-[1px]">
      <svg width="14" height="14" viewBox="0 0 14 14">
        <circle cx="7" cy="7" r="4.500" fill="none" stroke="#222" strokeWidth="2" />
        <path d="M7 0v3M7 11v3M0 7h3M11 7h3M2 2l2 2M10 10l2 2M12 2l-2 2M4 10l-2 2" stroke="#222" strokeWidth="1.300" />
      </svg>
    </div>
    <div className="h-[45px] w-[29px] ml-[3px] bg-white flex items-center justify-center shrink-0">
      <Ic s={25} v={32}>{railIcons[0]}</Ic>
    </div>
    <div className="flex flex-col -mt-[2px]">
      {railIcons.slice(1, 7).map((ic, i) => (
        <RailSlot key={i} h="h-[42px]" ic={ic} />
      ))}
      <div className="h-[7px]" />
      {railIcons.slice(7, 10).map((ic, i) => (
        <RailSlot key={i} h="h-[54px]" ic={ic} />
      ))}
      <div className="-mt-[7px]">
        {railIcons.slice(10).map((ic, i) => (
          <RailSlot key={i} h="h-[42px]" ic={ic} />
        ))}
      </div>
    </div>
  </div>
)

// the FEM model drawn in 3x coordinates of its 400x300 box
const Model = () => {
  const sil =
    'M85 365L135 342L150 355L185 353L198 378C235 445 310 490 420 490L458 466L552 428L568 446C640 410 720 345 790 260C835 195 858 130 855 68L915 50L1000 130V215L1090 295L1095 400L1035 440L985 515V560L935 605L895 570L440 740V780L385 800L335 755L220 790L92 640z'
  const arrows: [number, number, number, number][] = [
    [235, 455, 222, 485],
    [262, 480, 245, 510],
    [290, 505, 268, 530],
    [318, 532, 296, 560],
    [345, 558, 322, 578],
    [390, 520, 365, 565],
    [400, 525, 378, 572],
    [440, 563, 420, 612],
    [465, 590, 445, 636],
    [562, 486, 562, 535],
    [588, 510, 590, 560],
    [615, 536, 615, 585],
    [642, 560, 642, 612],
    [735, 378, 770, 425],
    [790, 432, 810, 455],
    [815, 456, 838, 490],
    [875, 212, 900, 218],
    [905, 238, 930, 244],
    [935, 266, 960, 272],
    [965, 292, 990, 298],
    [990, 317, 1010, 320],
  ]
  return (
    <svg width="400" height="300" viewBox="0 0 1200 900" className="absolute left-[635px] top-[205px]">
      <defs>
        <pattern id="tri" width="60" height="52" patternUnits="userSpaceOnUse" patternTransform="rotate(-22) skewX(-18)">
          <path d="M0 0H60M0 26H60M0 52H60M0 0L30 26L0 52M60 0L30 26L60 52M30 0V52" stroke="#75837c" strokeWidth="2.200" fill="none" />
        </pattern>
        <linearGradient id="bodyG" x1="0" y1="0" x2="0" y2="1">
          <stop offset="0" stopColor="#2f6149" />
          <stop offset=".7" stopColor="#2f6149" />
          <stop offset="1" stopColor="#38627a" />
        </linearGradient>
        <clipPath id="silClip">
          <path d={sil} />
        </clipPath>
      </defs>
      <g fill="#4d78a8">
        {[...Array(90).keys()].map((i) => (
          <circle key={i} cx={72 + (i % 15) * 9 + ((i / 15) | 0) * 9} cy={660 + (i % 15) * 7 + ((i / 15) | 0) * 3} r="2.500" />
        ))}
        {[...Array(20).keys()].map((i) => (
          <circle key={`a${i}`} cx={985 + (i % 5) * 9} cy={548 + ((i / 5) | 0) * 8 + (i % 5) * 2} r="2.500" />
        ))}
        {[...Array(20).keys()].map((i) => (
          <circle key={`b${i}`} cx={1035 + (i % 5) * 9} cy={442 + ((i / 5) | 0) * 8 + (i % 5) * 2} r="2.500" />
        ))}
        {[...Array(20).keys()].map((i) => (
          <circle key={`c${i}`} cx={436 + (i % 5) * 8} cy={760 + ((i / 5) | 0) * 7} r="2.500" />
        ))}
      </g>
      <path d={sil} fill="url(#bodyG)" />
      <g clipPath="url(#silClip)">
        <path d="M458 466L552 428L568 446C640 410 720 345 790 260L840 270C770 380 640 470 500 505z" fill="#5db389" />
        <path d="M790 260C835 195 858 130 855 68L882 100C885 170 865 230 840 270z" fill="#3f8c68" />
        <path d="M335 568Q640 575 850 355L878 385Q650 600 345 590z" fill="#5db389" />
        <path d="M418 625Q650 625 858 422L880 440Q660 650 440 645z" fill="#5db389" />
        <path d="M925 100L970 130L950 235L1040 315L930 470L890 430L838 345L905 205z" fill="#4b9672" />
        <path d="M180 530L240 505L320 575L265 605z" fill="#5fb58c" />
        <path d="M85 365L135 342L195 375L150 390L195 440L170 445L120 395z" fill="#5fb58c" />
        <path d="M855 70L915 50L1000 130L958 150L925 100L868 100z" fill="#5fb58c" />
        <path d="M948 235L1000 215L1090 295L1040 320z" fill="#5fb58c" />
        <path d="M470 590L525 570L560 605L490 625z" fill="#7da2a8" />
        <path d="M635 525L700 515L690 560L650 568z" fill="#7da2a8" />
        <path d="M280 530L430 660L380 640z" fill="#7a8a84" />
        <path d={sil} fill="url(#tri)" />
      </g>
      <path d="M270 620V760M895 480V570" stroke="#284f3c" strokeWidth="2" />
      <g stroke="#d2403f" strokeWidth="5" fill="#d2403f">
        {arrows.map(([a, b, c, d], i) => (
          <g key={i}>
            <line x1={a} y1={b} x2={c} y2={d} />
            <circle cx={a} cy={b} r="7" stroke="none" />
          </g>
        ))}
        <path d="M725 372L748 380L785 425L770 428z" stroke="none" />
      </g>
      <path d="M270 720l8 70-8 55-7-55z" fill="#1340c8" />
      <path d="M188 778l35 18 42 50-48-30z" fill="#36a436" />
      <path d="M285 850l55-30 75-20-50 28z" fill="#dd2f2f" />
      <text x="280" y="716" fontSize="42" fontWeight="700" fill="#3f62c4" fontFamily="Liberation Sans">ZC</text>
      <text x="192" y="768" fontSize="42" fontWeight="700" fill="#3f9c50" fontFamily="Liberation Sans">YC</text>
      <text x="372" y="790" fontSize="42" fontWeight="700" fill="#c84848" fontFamily="Liberation Sans">XC</text>
    </svg>
  )
}

const Triad = () => (
  <svg width="84" height="60" viewBox="0 0 84 60" className="absolute right-[14px] bottom-[54px]">
    <path d="M26 16l13-10 20 10v18L43 46 26 34z" fill="#d7d9d9" stroke="#b8b8b8" />
    <path d="M26 16l19 12 14-12M45 28v18" fill="none" stroke="#b8b8b8" />
    <path d="M42 50L6 28l8 13z" fill="#59a468" />
    <path d="M42 52L70 38l-2 5z" fill="#d85252" />
    <path d="M39 50l1-38 3-4 3 4-3 38z" fill="#1a3fb8" />
    <circle cx="42" cy="53" r="4" fill="#bbb" />
    <text x="37" y="8" fontSize="11" fill="#3a4fc4" fontFamily="Liberation Sans">Z</text>
    <text x="0" y="24" fontSize="11" fill="#4f9a60" fontFamily="Liberation Sans">Y</text>
    <text x="72" y="36" fontSize="11" fill="#d05050" fontFamily="Liberation Sans">X</text>
  </svg>
)

const Tooltip = () => (
  <div className="absolute left-[1005px] top-[159px] w-[306px] h-[96px] z-10 bg-white border border-[#b8b8b8] shadow-[2px_2px_4px_rgba(0,0,0,0.35)] pl-[7px] pt-[7px]">
    <div className="text-[18px] leading-[26px] font-bold text-[#333]">创建报告</div>
    <div className="mt-[5px] text-[18px] leading-[23px] text-[#333]">
      生成仿真报告并在仿真导航器中将其
      <br />
      显示为一个节点。
    </div>
  </div>
)

const Graphics = () => (
  <div className="flex-1 min-w-0 flex flex-col">
    <div className="h-[28px] shrink-0 bg-[#f0f0f0] flex">
      <div className="w-[329px] ml-[3px] bg-[#4e9fb8] flex items-center pl-[4px] text-white">
        <Ic s={16} v={16}>
          <path d="M1 3v12h4V3z" fill="#2f5fa8" />
          <path d="M7 1h4l2 6-3 8H6z" fill="#f2c43f" />
        </Ic>
        <span className="ml-[2px] text-[18.500px] leading-[26px] whitespace-nowrap">(仿真) M0201_2_fem1_sim1.sim</span>
        <svg width="10" height="10" viewBox="0 0 10 10" className="ml-[6px]">
          <path d="M1 1h6l2 2v6H1z" fill="none" stroke="#fff" />
        </svg>
        <svg width="9" height="9" viewBox="0 0 9 9" className="ml-[5px]">
          <path d="M1 1l7 7M8 1L1 8" stroke="#fff" strokeWidth="1.500" />
        </svg>
      </div>
    </div>
    <div className="h-[4px] shrink-0 bg-[#4e9fb8]" />
    <div className="flex-1 relative bg-[linear-gradient(180deg,#b7b9b9_0%,#e8e9ea_100%)] border-r-[3px] border-[#e4e4e4]">
      <Model />
      <Triad />
    </div>
  </div>
)

const StatusBar = () => (
  <div className="h-[27px] shrink-0 bg-[#f0f0f0] border-t border-[#b0b0b0] flex items-center justify-end pr-[56px]">
    <Ic s={14} v={14}>
      <path d="M1 1h12v12H1z" fill="#eee" stroke="#bbb" />
      <path d="M3 3h8v8H3z" fill="#2b5a9e" />
    </Ic>
  </div>
)

const TaskItem = ({ children, w, line, active }: { children: ReactNode; w: string; line?: boolean; active?: boolean }) => (
  <div className={`${w} h-full shrink-0 flex items-center justify-center border-b-[3px] ${line ? 'border-[#0e6fc4]' : 'border-transparent'} ${active ? 'bg-[#efefef]' : ''}`}>
    {children}
  </div>
)

const Taskbar = () => (
  <div className="h-[53px] shrink-0 bg-[#d0d0d0] flex items-stretch relative">
    <TaskItem w="w-[62px]">
      <svg width="20" height="20" viewBox="0 0 20 20">
        <path d="M0 3l8.500-1.200v7.700H0zM9.500 1.600L20 0v9.500H9.500zM0 10.500h8.500v7.700L0 17zM9.500 10.500H20V20L9.500 18.400z" fill="#000" />
      </svg>
    </TaskItem>
    <TaskItem w="w-[62px]">
      <div className="w-[24px] h-[24px] rounded-full border-[4px] border-[#222]" />
    </TaskItem>
    <TaskItem w="w-[64px]">
      <svg width="24" height="28" viewBox="0 0 24 28">
        <path d="M1 1h16M1 27h16M1 8h16v12H1zM23 1v6M23 12v15" fill="none" stroke="#111" strokeWidth="1.300" />
        <rect x="21" y="8" width="4" height="3" fill="#111" />
      </svg>
    </TaskItem>
    <div className="w-[10px]" />
    <TaskItem w="w-[52px]" line>
      <span className="text-[42px] leading-[40px] font-bold text-[#0e78d5] font-['Liberation_Sans',sans-serif] -mt-[6px]">e</span>
    </TaskItem>
    <div className="w-[10px]" />
    <TaskItem w="w-[52px]" line>
      <svg width="28" height="28" viewBox="0 0 28 28">
        <path d="M1 1h11l2 4h13v22H1z" fill="#f5d77a" />
        <path d="M1 1h11l2 4H1z" fill="#dea522" />
        <path d="M9 23V14h10v9h-4v-4h-2v4z" fill="#3f8fd0" />
      </svg>
    </TaskItem>
    <div className="w-[10px]" />
    <TaskItem w="w-[60px]">
      <svg width="23" height="31" viewBox="0 0 24 38" preserveAspectRatio="none">
        <path d="M0 0h24v38H0z" fill="#444" />
        <path d="M3 4h18v6H3z" fill="#ddd" />
        <path d="M4 14h3v4H4zM10 14h3v4h-3zM17 14h3v4h-3zM4 22h3v4H4zM10 22h3v4h-3zM17 22h3v4h-3zM4 30h3v4H4zM10 30h3v4h-3zM17 30h3v4h-3z" fill="#ccc" />
      </svg>
    </TaskItem>
    <TaskItem w="w-[62px]" line active>
      <svg width="34" height="36" viewBox="0 0 34 36">
        <circle cx="15" cy="20" r="14" fill="#1e8ce0" />
        <path d="M4 14a14 14 0 0 1 22 0l-8 10z" fill="#36b14a" opacity=".7" />
        <path d="M3 31C14 32 30 20 30 8c5 9-8 28-27 23z" fill="#e8a83a" />
        <path d="M3 0l15 3-7 15z" fill="#c82748" />
      </svg>
    </TaskItem>
    <div className="ml-auto flex items-center pr-[33px] text-[#111]">
      <svg width="18" height="10" viewBox="0 0 18 10" className="mr-[14px]">
        <path d="M1 9l8-8 8 8" fill="none" stroke="#111" strokeWidth="1.300" />
      </svg>
      <Ic s={20} v={20}>
        <path d="M1 10l9-5 9 5-9 5z" fill="#1d7ad4" />
        <path d="M5 12h14v4a5 4 0 0 1-10 3H5z" fill="#f2cf2e" />
      </Ic>
      <div className="ml-[9px] w-[20px] h-[20px] bg-[#f07c1c] text-white text-[15px] leading-[20px] text-center font-bold">中</div>
      <svg width="20" height="14" viewBox="0 0 20 14" className="ml-[11px]">
        <path d="M4 2h15v10H4z" fill="#111" />
        <circle cx="2" cy="3" r="1.500" fill="none" stroke="#111" />
      </svg>
      <svg width="20" height="18" viewBox="0 0 20 18" className="ml-[11px]">
        <path d="M1 17a16 16 0 0 1 16-16M5 17a12 12 0 0 1 12-12M9 17a8 8 0 0 1 8-8" fill="none" stroke="#222" />
        <circle cx="15" cy="15" r="2" fill="#222" />
      </svg>
      <svg width="20" height="18" viewBox="0 0 20 18" className="ml-[7px]">
        <path d="M1 6h3l5-5v16l-5-5H1z" fill="none" stroke="#222" />
        <path d="M12 6a4 4 0 0 1 0 6M15 4a7 7 0 0 1 0 10" fill="none" stroke="#222" />
      </svg>
      <span className="ml-[9px] text-[18px] leading-[20px] text-white [-webkit-text-stroke:0.6px_#2f75b5]">中</span>
      <div className="ml-[18px] w-[20px] h-[18px] rotate-[-12deg] rounded-[3px] bg-[#e84c24] text-white text-[15px] leading-[18px] text-center font-bold font-['Liberation_Sans',sans-serif]">S</div>
      <div className="ml-[16px] w-[84px] text-center text-[16.500px] leading-[24px] text-[#111] whitespace-nowrap">
        <div>9:29</div>
        <div>2020/3/20</div>
      </div>
      <svg width="20" height="20" viewBox="0 0 20 20" className="ml-[23px]">
        <path d="M1 2h18v13H12l-2 3-2-3H1z" fill="none" stroke="#111" strokeWidth="1.200" />
      </svg>
    </div>
  </div>
)

const Watermark = () => (
  <div className="absolute left-[1637px] top-[987px] flex pointer-events-none opacity-65 z-10">
    <svg width="72" height="80" viewBox="0 0 72 80">
      <path d="M36 0l36 20v40L36 80 0 60V20z" fill="#7fc5ea" />
      <path d="M36 20l17 10v20L36 60 19 50V30z" fill="#cfe9f7" />
      <path d="M36 40l17-10v20L36 60z" fill="#6ab7e0" />
      <path d="M36 40L19 30v20l17 10z" fill="#a8d8f0" />
      <path d="M10 30L36 14l26 16" fill="none" stroke="#d8e0e4" strokeWidth="4" />
    </svg>
    <div className="ml-[8px] pt-[7px] text-white">
      <div className="text-[42px] leading-[44px] font-bold whitespace-nowrap">3D世界网</div>
      <div className="mt-[6px] ml-[20px] text-[12px] leading-[14px] font-bold tracking-[4px] font-['Liberation_Sans',sans-serif] whitespace-nowrap">WWW.3DSJW.COM</div>
    </div>
  </div>
)

export default function App() {
  return (
    <div className="w-[1920px] h-[1080px] overflow-hidden relative flex flex-col bg-[#efefef] font-['Noto_Sans','Noto_Sans_CJK_SC',sans-serif]">
      <TitleBar />
      <TabBar />
      <Ribbon />
      <Toolbar />
      <div className="flex-1 min-h-0 flex">
        <LeftRail />
        <Navigator />
        <Graphics />
      </div>
      <StatusBar />
      <Taskbar />
      <Tooltip />
      <Watermark />
    </div>
  )
}
